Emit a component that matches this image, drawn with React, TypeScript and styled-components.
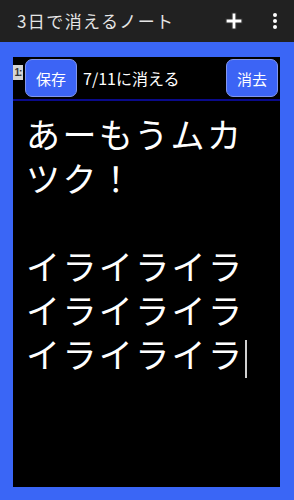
import styled, { createGlobalStyle } from "styled-components"

const Global = createGlobalStyle`
    html, body {
        margin: 0;
        padding: 0;
        background: #000;
    }
    body {
        font-family: "Noto Sans CJK JP", "Noto Sans", Roboto, sans-serif;
    }
`

const Screen = styled.div`
    width: 294px;
    height: 500px;
    display: flex;
    flex-direction: column;
    overflow: hidden;
`

const AppBar = styled.div`
    height: 42px;
    flex-shrink: 0;
    background: #212121;
    display: flex;
    align-items: center;
    padding: 0 16px 0 17px;
    box-sizing: border-box;
`

const AppTitle = styled.div`
    flex: 1;
    color: #e6e6e6;
    font-size: 17px;
    letter-spacing: 1.4px;
    margin-top: -2px;
`

const BarIcon = styled.svg<{ $gap?: number }>`
    display: block;
    margin-right: ${p => p.$gap ?? 0}px;
`

const Frame = styled.div`
    flex: 1;
    background: #3a66f6;
    padding: 15px 14px 13px 13px;
    display: flex;
`

const Sheet = styled.div`
    flex: 1;
    background: #000;
    display: flex;
    flex-direction: column;
`

const Header = styled.div`
    height: 44px;
    box-sizing: border-box;
    border-bottom: 2px solid #0a0a8a;
    display: flex;
    align-items: center;
    padding: 3px 2px 3px 0;
`

const Tag = styled.div`
    width: 10px;
    height: 15px;
    flex-shrink: 0;
    background: #d4d4d4;
    color: #333;
    font-size: 10px;
    line-height: 15px;
    white-space: nowrap;
    letter-spacing: -1px;
    text-align: center;
    font-family: "Liberation Sans", sans-serif;
    font-weight: bold;
    margin: 5px 2px 0 0;
    align-self: flex-start;
`

const Btn = styled.button`
    width: 52px;
    height: 38px;
    flex-shrink: 0;
    border-radius: 7px;
    background: #3c64f5;
    border: 1.5px solid #8296ee;
    color: #fff;
    font-family: "Noto Sans CJK JP", sans-serif;
    font-size: 15px;
    padding: 0;
`

const Expiry = styled.div`
    flex: 1;
    color: #fff;
    font-size: 16px;
    margin-left: 6px;
`

const Editor = styled.div`
    flex: 1;
    color: #fff;
    font-size: 34px;
    line-height: 44px;
    padding: 11px 10px 8px 13px;
    white-space: pre-wrap;
    letter-spacing: 2.4px;
`

const Caret = styled.span`
    display: inline-block;
    width: 2px;
    height: 38px;
    background: #d0d0d0;
    vertical-align: -10px;
    margin-left: 1px;
`

export default function App() {
    return (
        <>
            <Global />
            <Screen>
                <AppBar>
                    <AppTitle>3日で消えるノート</AppTitle>
                    <BarIcon $gap={29} width="18" height="18" viewBox="0 0 18 18">
                        <path d="M7 1h4v6h6v4h-6v6H7v-6H1V7h6z" fill="#fff" stroke="#333" strokeWidth="1.2" />
                    </BarIcon>
                    <BarIcon width="6" height="18" viewBox="0 0 6 18">
                        <circle cx="3" cy="3" r="2" fill="#fff" />
                        <circle cx="3" cy="9" r="2" fill="#fff" />
                        <circle cx="3" cy="15" r="2" fill="#fff" />
                    </BarIcon>
                </AppBar>
                <Frame>
                    <Sheet>
                        <Header>
                            <Tag>1:</Tag>
                            <Btn>保存</Btn>
                            <Expiry>7/11に消える</Expiry>
                            <Btn>消去</Btn>
                        </Header>
                        <Editor>
                            {"あーもうムカ\nツク！\n\nイライライラ\nイライライラ\nイライライラ"}
                            <Caret />
                        </Editor>
                    </Sheet>
                </Frame>
            </Screen>
        </>
    )
}
